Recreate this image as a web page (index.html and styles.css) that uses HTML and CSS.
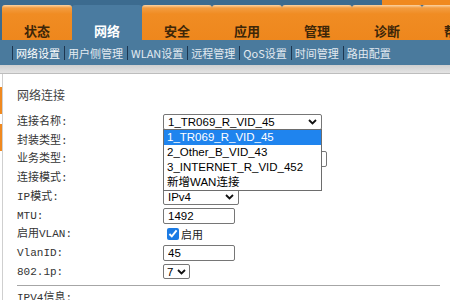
FILE: index.html
```html
<!DOCTYPE html>
<html lang="zh-CN">
<head>
    <meta charset="UTF-8">
    <meta name="viewport" content="width=device-width, initial-scale=1.0">
    <title>网络设置</title>
    <link rel="stylesheet" href="styles.css">
</head>
<body>
    <div class="header">
        <div class="strip"></div>
        <ul class="tabs">
            <li>状态</li>
            <li class="on">网络</li>
            <li>安全</li>
            <li>应用</li>
            <li>管理</li>
            <li>诊断</li>
            <li>帮助</li>
        </ul>
        <div class="subnav">
            <span class="sep"></span><a class="on">网络设置</a>
            <span class="sep"></span><a>用户侧管理</a>
            <span class="sep"></span><a>WLAN设置</a>
            <span class="sep"></span><a>远程管理</a>
            <span class="sep"></span><a>QoS设置</a>
            <span class="sep"></span><a>时间管理</a>
            <span class="sep"></span><a>路由配置</a>
        </div>
    </div>
    <div class="shade"></div>

    <div class="main">
        <div class="side">
            <span class="mark"></span>
            <span class="mark"></span>
        </div>
        <div class="content">
            <h2>网络连接</h2>
            <div class="form">
                <div class="lbl">连接名称:</div>
                <div class="ctl menu-anchor">
                    <div class="select w159">
                        <span>1_TR069_R_VID_45</span>
                        <svg class="chev" width="9" height="6" viewBox="0 0 9 6"><polyline points="1,1 4.5,4.5 8,1" fill="none" stroke="#111" stroke-width="1.8"/></svg>
                    </div>
                    <ul class="dropdown">
                        <li class="hl">1_TR069_R_VID_45</li>
                        <li>2_Other_B_VID_43</li>
                        <li>3_INTERNET_R_VID_452</li>
                        <li>新增WAN连接</li>
                    </ul>
                </div>

                <!-- these three sit under the open menu -->
                <div class="lbl">封装类型:</div>
                <div class="ctl"><div class="select w159"></div></div>

                <div class="lbl">业务类型:</div>
                <div class="ctl"><div class="select w164"></div></div>

                <div class="lbl">连接模式:</div>
                <div class="ctl"><div class="select w159"></div></div>

                <div class="lbl">IP模式:</div>
                <div class="ctl">
                    <div class="select w76">
                        <span>IPv4</span>
                        <svg class="chev" width="9" height="6" viewBox="0 0 9 6"><polyline points="1,1 4.5,4.5 8,1" fill="none" stroke="#111" stroke-width="1.8"/></svg>
                    </div>
                </div>

                <div class="lbl">MTU:</div>
                <div class="ctl"><input class="input" type="text" value="1492"></div>

                <div class="lbl">启用VLAN:</div>
                <div class="ctl"><label class="check"><input type="checkbox" checked>启用</label></div>

                <div class="lbl">VlanID:</div>
                <div class="ctl"><input class="input" type="text" value="45"></div>

                <div class="lbl">802.1p:</div>
                <div class="ctl">
                    <div class="select w27 small">
                        <span>7</span>
                        <svg class="chev" width="9" height="6" viewBox="0 0 9 6"><polyline points="1,1 4.5,4.5 8,1" fill="none" stroke="#111" stroke-width="1.8"/></svg>
                    </div>
                </div>
            </div>
            <hr class="divider">
            <div class="lbl section">IPV4信息:</div>
        </div>
    </div>
</body>
</html>
```

FILE: styles.css
```css
body {
    margin: 0;
    width: 450px;
    height: 300px;
    overflow: hidden;
    background: #fff;
    font-family: "Noto Sans CJK SC", "Liberation Sans", sans-serif;
    color: #333;
}

.strip {
    height: 5px;
    background: linear-gradient(to right, #3c6b8f 0, #3c6b8f 382px, #f0891f 382px);
}

.tabs {
    display: flex;
    margin: 0;
    padding: 0 0 0 2px;
    list-style: none;
    height: 35px;
    background: #3c6b8f;
    white-space: nowrap;
}

.tabs li {
    flex: 0 0 70px;
    display: flex;
    align-items: flex-end;
    justify-content: center;
    padding-bottom: 1px;
    box-sizing: border-box;
    font-size: 13px;
    font-weight: bold;
    line-height: 16px;
    color: #3d2608;
    background: linear-gradient(#fbd3a4 0, #f39c40 3px, #f08c23 9px, #ee871d 100%);
    border-radius: 3px 3px 0 0;
}

.tabs li.on {
    background: #4a7ba0;
    color: #fff;
}

.subnav {
    height: 25px;
    display: flex;
    align-items: center;
    padding-left: 12px;
    background: #4a7a9d;
    font-size: 11px;
    color: #e3eaf1;
    white-space: nowrap;
}

.subnav .sep {
    width: 1px;
    height: 14px;
    background: #1d3650;
    margin: 0 3px 0 4px;
}

.subnav .sep:first-child {
    margin-left: 0;
}

.subnav a.on {
    color: #fff;
}

.shade {
    height: 8px;
    background: linear-gradient(#cfcfcf, #e4e4e4);
    border-bottom: 1px solid #bdbdbd;
}

.main {
    display: flex;
}

.side {
    width: 2px;
    padding-top: 13px;
    display: flex;
    flex-direction: column;
    gap: 10px;
}

.mark {
    display: block;
    height: 27px;
    background: #f0891f;
}

.content {
    flex: 1;
    border-left: 1px solid #cfcfcf;
    padding: 13px 10px 0 14px;
    min-height: 300px;
}

h2 {
    margin: 0;
    font-size: 12px;
    line-height: 16px;
    font-weight: normal;
    color: #444;
}

.form {
    display: grid;
    grid-template-columns: 146px auto;
    grid-auto-rows: 18.75px;
    align-items: center;
    margin-top: 9.5px;
}

.lbl {
    font-family: "Liberation Mono", "Noto Sans CJK SC", monospace;
    font-size: 11px;
    line-height: 14px;
    color: #333;
}

.ctl {
    display: flex;
    align-items: center;
}

.menu-anchor {
    position: relative;
}

.select {
    display: flex;
    align-items: center;
    justify-content: space-between;
    height: 16px;
    box-sizing: border-box;
    padding: 0 4px;
    border: 1px solid #767676;
    border-radius: 2px;
    background: #fff;
    font: 11.5px/14px "Liberation Sans", sans-serif;
    color: #000;
}

.select.small {
    height: 15px;
    padding: 0 3px;
}

.w159 { width: 159px; }
.w164 { width: 164px; }
.w76 { width: 76px; }
.w27 { width: 27px; }

.chev {
    flex: none;
}

.dropdown {
    position: absolute;
    top: 15px;
    left: 0;
    z-index: 2;
    width: 159px;
    box-sizing: border-box;
    margin: 0;
    padding: 0;
    list-style: none;
    background: #fff;
    border: 1px solid #6d6d6d;
    font: 11.5px/15px "Liberation Sans", "Noto Sans CJK SC", sans-serif;
    color: #000;
}

.dropdown li {
    height: 15px;
    padding-left: 3px;
    white-space: nowrap;
}

.dropdown li.hl {
    background: #1f84ee;
    color: #fff;
}

.input {
    width: 72px;
    height: 16px;
    box-sizing: border-box;
    margin: 0;
    padding: 0 4px;
    border: 1px solid #767676;
    border-radius: 2px;
    font: 11.5px/14px "Liberation Sans", sans-serif;
    color: #000;
}

.check {
    display: flex;
    align-items: center;
    font-size: 11px;
    color: #222;
}

.check input {
    margin: 0 2px 0 4px;
    width: 12px;
    height: 12px;
    accent-color: #1c7be4;
}

.divider {
    border: 0;
    border-top: 1px solid #a6a6a6;
    margin: 4px 0 0 0;
}

.section {
    margin-top: 5px;
}
```
